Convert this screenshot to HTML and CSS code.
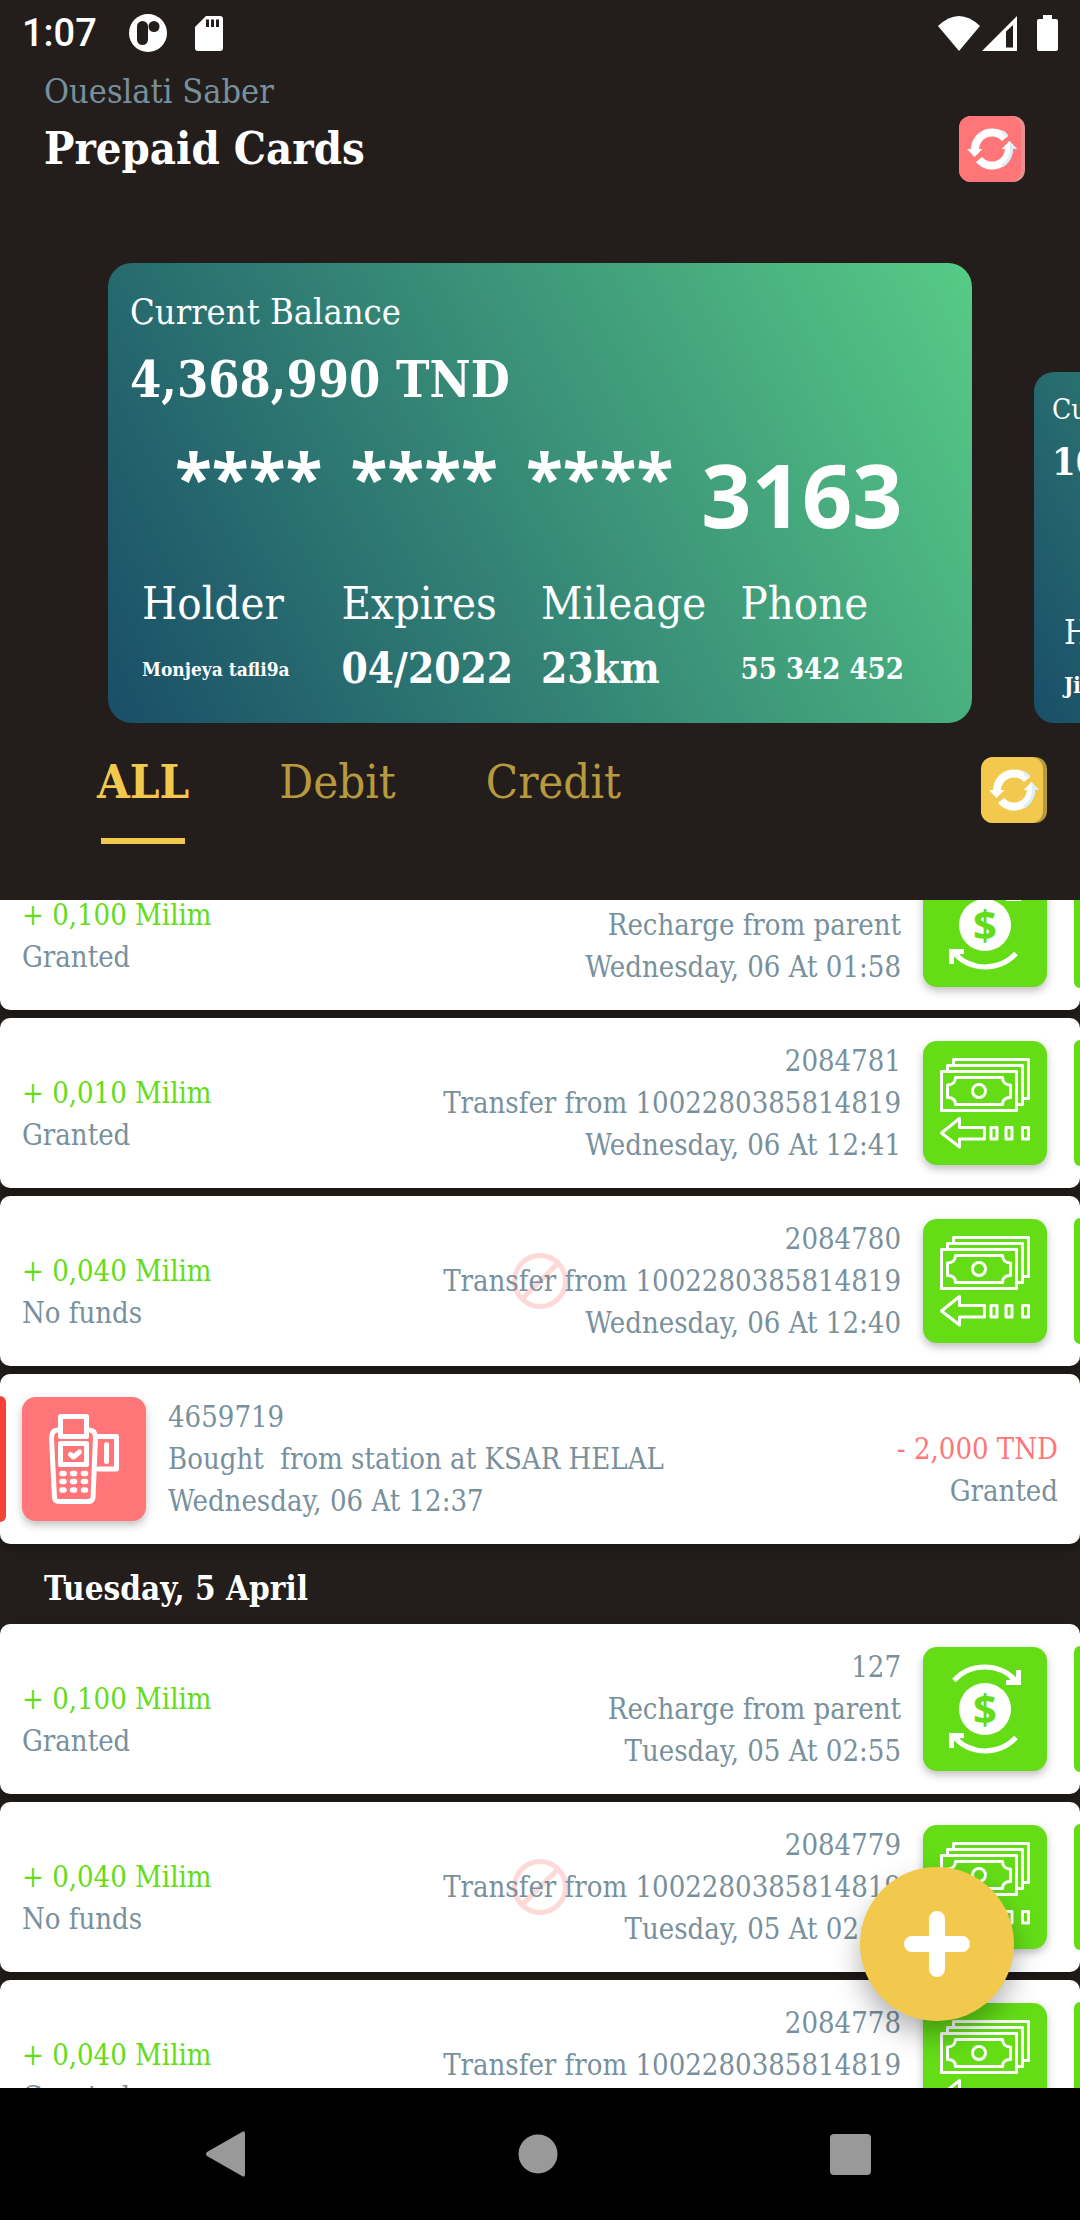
FILE: index.html
```html
<!DOCTYPE html>
<html lang="en">
<head>
<meta charset="utf-8">
<meta name="viewport" content="width=device-width, initial-scale=1">
<title>Prepaid Cards</title>
<link rel="stylesheet" href="styles.css">
</head>
<body>
<svg class="defs" aria-hidden="true">
  <symbol id="refresh" viewBox="0 0 66 66">
    <rect class="edge" width="66" height="66" rx="12"/>
    <rect class="face" width="62" height="66" rx="12"/>
    <g fill="none" stroke="#fff" stroke-width="8">
      <path d="M46 22.500A17 17 0 0 0 16 34"/>
      <path d="M20 43.500A17 17 0 0 0 50 32"/>
    </g>
    <path fill="none" stroke="#d9effc" stroke-width="3" d="M43 15.500Q46 17.500 48 20M52.500 32Q52.500 44 43 50"/>
    <path fill="#fff" d="M8 33H23.500L15.500 41ZM42.500 33H58L50.500 25Z"/>
    <path fill="#d9effc" d="M50.500 25L58 33H51Z"/>
  </symbol>
  <symbol id="money" viewBox="0 0 124 124">
    <g fill="none" stroke="#fff" stroke-width="3" stroke-linejoin="round">
      <rect x="18.500" y="30.500" width="75" height="39"/>
      <path d="M24.500 29V24.500H99.500V63.500H95M30.500 24V18.500H105.500V57.500H101"/>
      <path d="M32.500 36.500H79.500C79.500 41 82.500 44 87.500 44V56.500C82.500 56.500 79.500 59 79.500 63.500H32.500C32.500 59 29.500 56.500 24.500 56.500V44C29.500 44 32.500 41 32.500 36.500Z"/>
      <circle cx="56" cy="50" r="6.500"/>
      <path d="M18.500 92L36.500 77.500V86.500H61.500V98H36.500V106Z"/>
      <path d="M68 86.500H74V98H68ZM83 86.500H89V98H83ZM99.500 86.500H105.500V98H99.500Z"/>
    </g>
  </symbol>
  <symbol id="recharge" viewBox="0 0 124 124">
    <g id="turn" fill="none" stroke="#fff" stroke-width="5">
      <path d="M31 33.500A42 42 0 0 1 92 33"/>
      <path d="M95.500 23V35.500H83"/>
      <path d="M88 30L94 35"/>
    </g>
    <use href="#turn" transform="rotate(180 62 62)"/>
    <circle cx="62" cy="62" r="26" fill="#fff"/>
    <text class="coin" x="62" y="77" text-anchor="middle">$</text>
  </symbol>
  <symbol id="terminal" viewBox="0 0 124 124">
    <g fill="none" stroke="#fff" stroke-width="5" stroke-linejoin="round" stroke-linecap="round">
      <rect x="38.500" y="19.500" width="26" height="20"/>
      <path d="M36 33Q29.500 33 29.500 41L32.500 101Q33 104.500 37 104.500H66Q70 104.500 71 101L73.500 41Q73.500 33 67 33"/>
      <rect x="38.500" y="46.500" width="26" height="21"/>
      <path d="M48.500 57.500L51.500 60L57.500 55"/>
      <path d="M76 39.500H94.500V72H76"/>
      <path d="M84.500 47.500V64.500"/>
      <path stroke-width="5.500" d="M40 76.500H42M50.500 76.500H52.500M61.500 76.500H63.500M40 84.500H42M50.500 84.500H52.500M61.500 84.500H63.500M40 93H42M50.500 93H52.500M61.500 93H63.500"/>
    </g>
  </symbol>
  <symbol id="blocked" viewBox="0 0 58 58">
    <g fill="none" stroke="#ffd9d7" stroke-width="5">
      <circle cx="29" cy="29" r="25.500"/>
      <path d="M11 47L47 11"/>
    </g>
  </symbol>
</svg>

<div class="app">
  <header class="status">
    <span class="clock">1:07</span>
    <svg width="38" height="38" viewBox="0 0 38 38"><circle cx="19" cy="19" r="19" fill="#fff"/><rect x="8" y="7" width="11" height="24" rx="5.500" fill="#231e1c"/><circle cx="25" cy="12.500" r="5.500" fill="#231e1c"/></svg>
    <svg class="sd" width="28" height="35" viewBox="0 0 28 35"><path fill="#fff" d="M11 0H25Q28 0 28 3V32Q28 35 25 35H3Q0 35 0 32V11Z"/><path fill="#231e1c" d="M11 3.500H14V11H11ZM16 3.500H19V11H16ZM21 3.500H24V11H21Z"/></svg>
    <svg class="wifi" width="42" height="35" viewBox="0 0 42 35"><path fill="#fff" d="M0 10Q21 -10 42 10L21 35Z"/></svg>
    <svg class="signal" width="35" height="35" viewBox="0 0 35 35"><path fill="#fff" fill-rule="evenodd" d="M35 0V35H0ZM24 15.500V31.500H31V9Z"/></svg>
    <svg width="21" height="36" viewBox="0 0 21 36"><path fill="#fff" d="M6 0H15V4H19Q21 4 21 6V34Q21 36 19 36H2Q0 36 0 34V6Q0 4 2 4H6Z"/></svg>
  </header>

  <section class="title-bar">
    <div>
      <p class="user">Oueslati Saber</p>
      <h1 class="title">Prepaid Cards</h1>
    </div>
    <button class="refresh refresh--pink" type="button" aria-label="Refresh cards"><svg><use href="#refresh"/></svg></button>
  </section>

  <section class="cards">
    <article class="card">
      <p class="card-label">Current Balance</p>
      <p class="card-amount">4,368,990 TND</p>
      <p class="card-number"><span class="stars">****</span><span class="stars">****</span><span class="stars">****</span><span>3163</span></p>
      <dl class="meta">
        <div><dt>Holder</dt><dd class="size-s">Monjeya tafli9a</dd></div>
        <div><dt>Expires</dt><dd>04/2022</dd></div>
        <div><dt>Mileage</dt><dd>23km</dd></div>
        <div><dt>Phone</dt><dd class="size-m">55 342 452</dd></div>
      </dl>
    </article>
    <article class="card card--next">
      <p class="card-label">Current Balance</p>
      <p class="card-amount">10</p>
      <dl class="meta">
        <div><dt>Holder</dt><dd>Ji</dd></div>
      </dl>
    </article>
  </section>

  <nav class="filters">
    <button class="tab tab--active" type="button">ALL</button>
    <button class="tab" type="button">Debit</button>
    <button class="tab" type="button">Credit</button>
    <button class="refresh refresh--yellow" type="button" aria-label="Refresh transactions"><svg><use href="#refresh"/></svg></button>
  </nav>

  <main class="history">
    <div class="history-scroll">
      <ul class="rows">
        <li class="row">
          <div class="sum"><p class="plus">+ 0,100 Milim</p><p>Granted</p></div>
          <div class="info"><p>&nbsp;</p><p>Recharge from parent</p><p>Wednesday, 06 At 01:58</p></div>
          <svg class="tile"><use href="#recharge"/></svg><i class="stripe"></i>
        </li>
        <li class="row">
          <div class="sum"><p class="plus">+ 0,010 Milim</p><p>Granted</p></div>
          <div class="info"><p>2084781</p><p>Transfer from 1002280385814819</p><p>Wednesday, 06 At 12:41</p></div>
          <svg class="tile"><use href="#money"/></svg><i class="stripe"></i>
        </li>
        <li class="row">
          <svg class="blocked"><use href="#blocked"/></svg>
          <div class="sum"><p class="plus">+ 0,040 Milim</p><p>No funds</p></div>
          <div class="info"><p>2084780</p><p>Transfer from 1002280385814819</p><p>Wednesday, 06 At 12:40</p></div>
          <svg class="tile"><use href="#money"/></svg><i class="stripe"></i>
        </li>
        <li class="row row--debit">
          <i class="stripe"></i><svg class="tile"><use href="#terminal"/></svg>
          <div class="info"><p>4659719</p><p>Bought&nbsp; from station at KSAR HELAL</p><p>Wednesday, 06 At 12:37</p></div>
          <div class="sum"><p class="minus">- 2,000 TND</p><p>Granted</p></div>
        </li>
      </ul>
      <h2 class="day">Tuesday, 5 April</h2>
      <ul class="rows">
        <li class="row">
          <div class="sum"><p class="plus">+ 0,100 Milim</p><p>Granted</p></div>
          <div class="info"><p>127</p><p>Recharge from parent</p><p>Tuesday, 05 At 02:55</p></div>
          <svg class="tile"><use href="#recharge"/></svg><i class="stripe"></i>
        </li>
        <li class="row">
          <svg class="blocked"><use href="#blocked"/></svg>
          <div class="sum"><p class="plus">+ 0,040 Milim</p><p>No funds</p></div>
          <div class="info"><p>2084779</p><p>Transfer from 1002280385814819</p><p>Tuesday, 05 At 02:55</p></div>
          <svg class="tile"><use href="#money"/></svg><i class="stripe"></i>
        </li>
        <li class="row">
          <div class="sum"><p class="plus">+ 0,040 Milim</p><p>Granted</p></div>
          <div class="info"><p>2084778</p><p>Transfer from 1002280385814819</p><p>&nbsp;</p></div>
          <svg class="tile"><use href="#money"/></svg><i class="stripe"></i>
        </li>
      </ul>
    </div>
    <button class="add" type="button" aria-label="Add">
      <svg width="66" height="66" viewBox="0 0 66 66"><path stroke="#fff" stroke-width="16" stroke-linecap="round" d="M33 8V58M8 33H58"/></svg>
    </button>
  </main>

  <nav class="system">
    <button type="button" aria-label="Back"><svg width="40" height="46" viewBox="0 0 40 46"><path fill="#999" d="M36 1Q39 -1 39 3V43Q39 47 36 45L1 25Q-1 23 1 21Z"/></svg></button>
    <button type="button" aria-label="Home"><svg width="40" height="40" viewBox="0 0 40 40"><circle cx="20" cy="20" r="19.500" fill="#999"/></svg></button>
    <button type="button" aria-label="Recents"><svg width="41" height="41" viewBox="0 0 41 41"><rect width="41" height="41" rx="4" fill="#999"/></svg></button>
  </nav>
</div>
</body>
</html>
```
FILE: styles.css
```css
:root {
  --dark: #231e1c;
  --slate: #78909c;
  --green: #64dd17;
  --pink: #ff7578;
  --yellow: #f2c94c;
}

* { box-sizing: border-box; margin: 0; padding: 0; }

body {
  background: var(--dark);
  color: #fff;
  font-family: "DejaVu Serif Condensed", "DejaVu Serif", serif;
}

button {
  border: 0;
  background: none;
  color: inherit;
  font: inherit;
  cursor: pointer;
}

svg { display: block; flex: none; }
ul { list-style: none; }
.defs { display: none; }

.app {
  display: flex;
  flex-direction: column;
  height: 100vh;
  overflow: hidden;
}

/* Status bar */
.status {
  display: flex;
  align-items: center;
  height: 66px;
  padding: 0 22px;
}
.clock { margin-right: 32px; font: 500 38px/66px Roboto, sans-serif; }
.sd { margin-left: 28px; }
.wifi { margin-left: auto; }
.signal { margin: 0 20px 0 2px; }

/* Title */
.title-bar {
  display: flex;
  justify-content: space-between;
  align-items: flex-end;
  padding: 0 55px 0 44px;
}
.user { color: var(--slate); font-size: 34px; line-height: 50px; }
.title { font-size: 45px; line-height: 66px; }
.refresh { flex: none; width: 66px; height: 66px; }
.refresh svg { width: 100%; height: 100%; }
.title-bar .refresh--pink { --face: var(--pink); --edge: #e58f8f; }
.refresh--yellow { --face: var(--yellow); --edge: #b8993e; }
.face { fill: var(--face); }
.edge { fill: var(--edge); }

/* Card carousel */
.cards {
  display: flex;
  align-items: flex-end;
  gap: 62px;
  margin-top: 81px;
  padding-left: 10vw;
  overflow: hidden;
}
.card {
  flex: 0 0 80vw;
  padding: 24px 22px 28px;
  border-radius: 24px;
  background: linear-gradient(62deg, #194e68, #57cb86);
  white-space: nowrap;
}
.card-label { font-size: 36px; line-height: 50px; }
.card-amount { font-size: 50px; font-weight: 700; line-height: 86px; }
.card-number {
  display: flex;
  align-items: flex-start;
  gap: 28px;
  padding-left: 45px;
  font: 700 88px/142px "Noto Sans", sans-serif;
}
.stars { font-size: 68px; line-height: 108px; }
.meta { display: grid; grid-template-columns: repeat(4, 1fr); padding: 0 10px 0 12px; }
.meta > div { min-width: 0; }
.meta dt { font-size: 45px; line-height: 78px; }
.meta dd { font-size: 42px; font-weight: 700; line-height: 52px; }
.meta .size-s { font-size: 19px; }
.meta .size-m { font-size: 29px; }

.card--next { flex-basis: 61vw; padding: 18px 18px 17px; border-radius: 20px; }
.card--next .card-label { font-size: 28px; line-height: 40px; }
.card--next .card-amount { margin-bottom: 108px; font-size: 38px; line-height: 64px; }
.card--next dt { font-size: 33px; line-height: 62px; }
.card--next dd { font-size: 22px; line-height: 42px; }

/* Filters */
.filters {
  display: flex;
  align-items: flex-start;
  gap: 90px;
  padding: 31px 33px 56px 97px;
}
.tab { color: #b8993e; font-size: 47px; line-height: 56px; }
.tab--active { color: var(--yellow); font-weight: 700; }
.tab--active::after {
  content: "";
  display: block;
  height: 6px;
  margin: 28px 4px 0;
  background: currentColor;
}
.filters .refresh { margin: 3px 0 0 auto; }

/* Transactions */
.history { position: relative; flex: 1; min-height: 0; overflow: hidden; }
.history-scroll { margin-top: -60px; }
.rows { display: flex; flex-direction: column; gap: 8px; }
.row {
  position: relative;
  display: flex;
  align-items: center;
  justify-content: space-between;
  padding: 22px 0 22px 22px;
  border-radius: 10px;
  background: #fff;
  box-shadow: 0 4px 12px rgba(0, 0, 0, .3);
  color: var(--slate);
  font-size: 29px;
  line-height: 42px;
  white-space: nowrap;
}
.sum { position: relative; padding-top: 22px; }
.plus { color: var(--green); }
.minus { color: var(--pink); }
.info { position: relative; margin: 0 22px 0 auto; text-align: right; }
.tile {
  width: 124px;
  height: 124px;
  border-radius: 14px;
  background: var(--green);
  box-shadow: 0 4px 8px rgba(0, 0, 0, .25);
}
.coin { fill: var(--green); font: 700 42px "Noto Sans", sans-serif; }
.stripe {
  flex: none;
  width: 6px;
  height: 126px;
  margin-left: 27px;
  border-radius: 6px 0 0 6px;
  background: var(--green);
}
.blocked {
  position: absolute;
  top: 50%;
  left: 50%;
  width: 58px;
  height: 58px;
  margin: -29px 0 0 -29px;
}
.row--debit { padding: 22px 22px 22px 0; }
.row--debit .stripe { margin: 0 16px 0 0; border-radius: 0 6px 6px 0; background: #f44336; }
.row--debit .tile { background: var(--pink); }
.row--debit .info { margin: 0 auto 0 22px; text-align: left; }
.row--debit .sum { text-align: right; }
.day { padding: 23px 44px 13px; font-size: 33px; line-height: 44px; }

.add {
  position: absolute;
  right: 66px;
  bottom: 67px;
  display: grid;
  place-items: center;
  width: 154px;
  height: 154px;
  border-radius: 50%;
  background: var(--yellow);
  box-shadow: 0 14px 28px rgba(0, 0, 0, .3);
}

/* System navigation */
.system {
  display: flex;
  align-items: center;
  justify-content: space-between;
  height: 132px;
  padding: 0 209px 0 206px;
  background: #000;
}
```
